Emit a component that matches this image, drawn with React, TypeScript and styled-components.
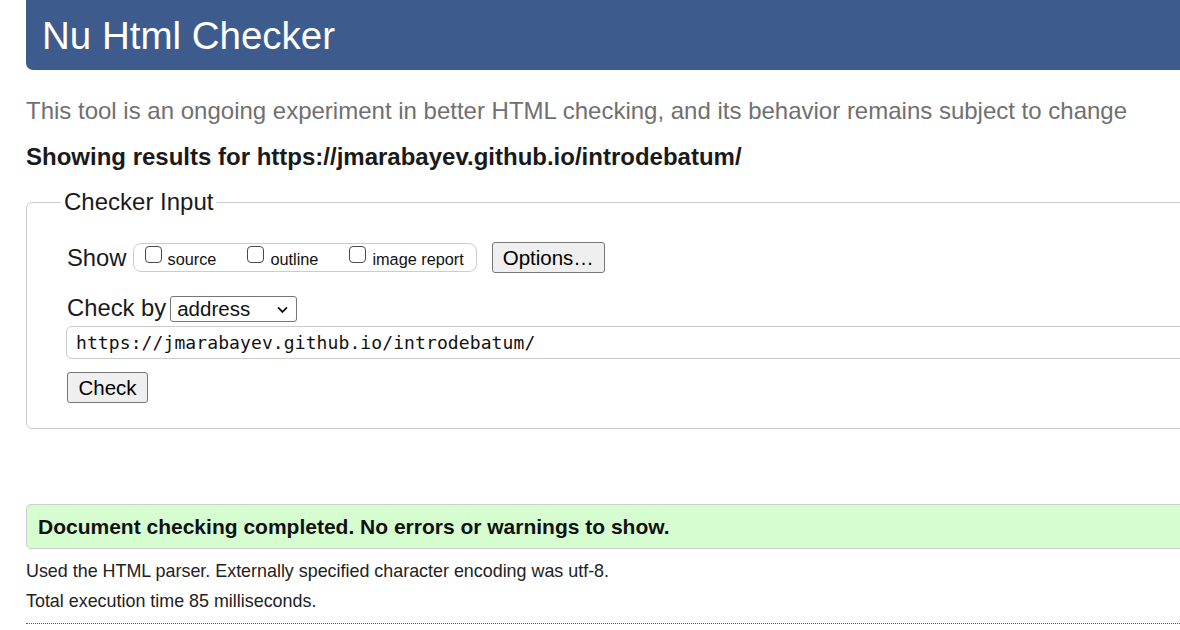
import React from "react";
import styled, { createGlobalStyle } from "styled-components";

const Global = createGlobalStyle`
  html, body {
    margin: 0;
    padding: 0;
    background: #fff;
    overflow: hidden;
  }
  body {
    font-family: "Liberation Sans", Arial, sans-serif;
    color: #111;
  }
`;

const Page = styled.div`
  width: 1300px;
  margin-left: 26px;
`;

const Header = styled.header`
  height: 70px;
  background: #3e5b8e;
  border-radius: 0 0 0 7px;
  display: flex;
  align-items: center;
  padding-left: 16px;
  h1 {
    margin: 0;
    color: #fff;
    font-weight: normal;
    font-size: 38.5px;
    padding-top: 1px;
  }
`;

const Lead = styled.p`
  margin: 26px 0 0 0;
  font-size: 24px;
  color: #707070;
  line-height: 30px;
`;

const Results = styled.h2`
  margin: 17px 0 0 0;
  font-size: 24px;
  font-weight: bold;
  line-height: 28px;
  color: #1a1a1a;
`;

const Fieldset = styled.fieldset`
  margin: 18px 0 0 0;
  padding: 14px 40px 25px 40px;
  border: 1px solid #cccccc;
  border-radius: 6px;
  width: 1200px;
  box-sizing: border-box;
  legend {
    font-size: 24px;
    padding: 0 3px;
    margin-left: -6px;
    line-height: 26px;
    color: #1a1a1a;
  }
`;

const Row = styled.div<{ $mt?: number }>`
  display: flex;
  align-items: center;
  margin-top: ${(p) => p.$mt ?? 0}px;
`;

const Label = styled.span`
  font-size: 23.8px;
  line-height: 28px;
  color: #1a1a1a;
`;

const OptionGroup = styled.div`
  display: flex;
  align-items: center;
  height: 27px;
  border: 1px solid #cccccc;
  border-radius: 8px;
  padding: 0 12px 0 11px;
  margin-left: 6px;
  gap: 31px;
`;

const Opt = styled.label`
  display: flex;
  align-items: center;
  font-size: 16.3px;
  gap: 6px;
  input {
    appearance: none;
    margin: 0;
    width: 17px;
    height: 17px;
    border: 1px solid #4a4a4a;
    border-radius: 4px;
    background: #fff;
    position: relative;
    top: -3px;
  }
  span {
    position: relative;
    top: 2px;
  }
`;

const Button = styled.button<{ $w: number; $ml?: number }>`
  width: ${(p) => p.$w}px;
  height: 31px;
  margin-left: ${(p) => p.$ml ?? 0}px;
  font-family: "Liberation Sans", Arial, sans-serif;
  font-size: 20.5px;
  background: #efefef;
  border: 1px solid #767676;
  border-radius: 3px;
  color: #000;
  padding: 0;
`;

const Select = styled.div`
  width: 127px;
  height: 26px;
  box-sizing: border-box;
  border: 1px solid #767676;
  border-radius: 3px;
  display: flex;
  align-items: center;
  justify-content: space-between;
  padding: 0 7px 0 6px;
  font-size: 20.5px;
  margin-left: 4px;
  margin-top: 2px;
  svg {
    width: 13px;
    height: 13px;
  }
`;

const UrlInput = styled.div`
  margin: 4px 0 0 -1px;
  height: 33px;
  box-sizing: border-box;
  border: 1px solid #cccccc;
  border-radius: 6px;
  display: flex;
  align-items: center;
  padding-left: 9px;
  font-family: "DejaVu Sans Mono", "Liberation Mono", monospace;
  font-size: 18px;
  letter-spacing: 0.1px;
  width: 1200px;
`;

const Success = styled.div`
  margin-top: 75px;
  height: 45px;
  box-sizing: border-box;
  background: #d5fdd0;
  border: 1px solid #cccccc;
  border-radius: 5px;
  display: flex;
  align-items: center;
  padding-left: 11px;
  font-size: 21px;
  font-weight: bold;
  width: 1200px;
`;

const Note = styled.p<{ $mt: number }>`
  margin: ${(p) => p.$mt}px 0 0 0;
  font-size: 17.9px;
  line-height: 22px;
  color: #222;
`;

const Dotted = styled.hr`
  margin: 11px 0 0 0;
  border: 0;
  border-top: 1px dotted #555;
  width: 1200px;
`;

export default function App() {
  return (
    <>
      <Global />
      <Page>
        <Header>
          <h1>Nu Html Checker</h1>
        </Header>
        <Lead>
          This tool is an ongoing experiment in better HTML checking, and its
          behavior remains subject to change
        </Lead>
        <Results>Showing results for https://jmarabayev.github.io/introdebatum/</Results>
        <Fieldset>
          <legend>Checker Input</legend>
          <Row $mt={13}>
            <Label>Show</Label>
            <OptionGroup>
              <Opt>
                <input type="checkbox" />
                <span>source</span>
              </Opt>
              <Opt>
                <input type="checkbox" />
                <span>outline</span>
              </Opt>
              <Opt>
                <input type="checkbox" />
                <span>image report</span>
              </Opt>
            </OptionGroup>
            <Button $w={113} $ml={15}>
              Options…
            </Button>
          </Row>
          <Row $mt={21}>
            <Label>Check by</Label>
            <Select>
              <span>address</span>
              <svg viewBox="0 0 16 16" fill="none" stroke="#111" strokeWidth="2.2">
                <path d="M2.5 5.5l5.5 5.5 5.5-5.5" />
              </svg>
            </Select>
          </Row>
          <UrlInput>https://jmarabayev.github.io/introdebatum/</UrlInput>
          <Row $mt={13}>
            <Button $w={81}>Check</Button>
          </Row>
        </Fieldset>
        <Success>Document checking completed. No errors or warnings to show.</Success>
        <Note $mt={11}>Used the HTML parser. Externally specified character encoding was utf-8.</Note>
        <Note $mt={8}>Total execution time 85 milliseconds.</Note>
        <Dotted />
      </Page>
    </>
  );
}
